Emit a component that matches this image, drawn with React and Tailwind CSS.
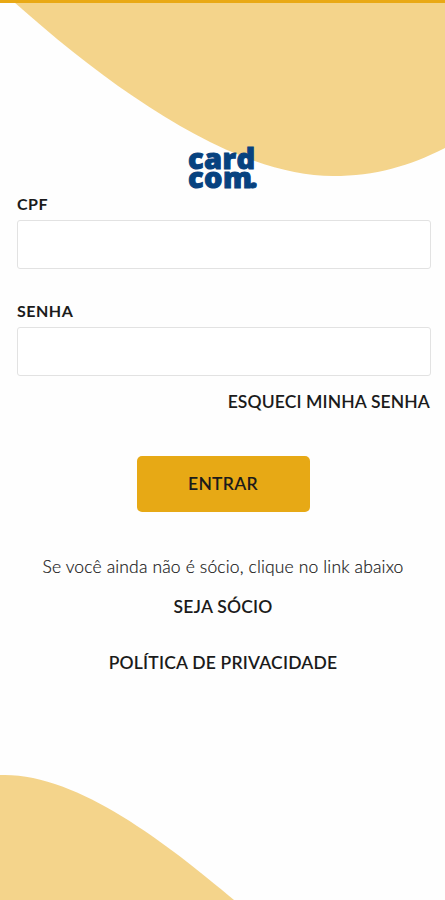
import React from 'react';

const Logo = () => (
  <div className="self-start ml-[171px] h-[50px] text-[29px] leading-[19px] font-extrabold text-[#07427f] font-['Open_Sans',sans-serif] tracking-[0.4px] [-webkit-text-stroke:1px_#07427f]">
    card
    <br />
    com<span className="-ml-[2px] italic">.</span>
  </div>
);

const Field = ({ id, label, type }) => (
  <div className="w-full">
    <label htmlFor={id} className="block h-[22px] text-[16px] leading-[22px] font-bold tracking-[0.5px]">
      {label}
    </label>
    <input
      id={id}
      type={type}
      className="block mt-[5px] w-full h-[49px] px-3 rounded-[3px] border border-[#e2e2e2] bg-white outline-none"
    />
  </div>
);

const App = () => {
  return (
    <div className="relative w-full h-[900px] overflow-hidden bg-[#fefefe] text-[#1b1b1b] font-['Lato',sans-serif]">
      {/* Background waves */}
      <svg className="absolute inset-0" width="445" height="900" viewBox="0 0 445 900" fill="#f4d48b">
        <path d="M14 2C115 92 235 176 333 176C375 176 410 166 445 148V2Z" />
        <path d="M0 775C75 772 165 842 234 900H0Z" />
      </svg>

      <div className="relative flex flex-col items-center h-full">
        <div className="w-full h-[3px] bg-[#e9a915]" />

        <div className="flex flex-col items-center w-full pl-[17px] pr-[14px] pt-[145px]">
          <Logo />

          <div className="-mt-[5px] w-full">
            <Field id="cpf" label="CPF" type="text" />
          </div>
          <div className="mt-[31px] w-full">
            <Field id="senha" label="SENHA" type="password" />
          </div>

          <a href="#" className="self-end mt-[14px] mr-[1px] text-[17.5px] leading-[24px] font-semibold tracking-[0.12px]">
            ESQUECI MINHA SENHA
          </a>
        </div>

        <button className="mt-[42px] ml-[1px] w-[173px] h-[56px] rounded-[5px] bg-[#e7a915] text-[17.5px] font-semibold tracking-[0.3px]">
          ENTRAR
        </button>

        <p className="mt-[43px] ml-[1px] text-[17.5px] leading-[24px] font-light tracking-[0.15px] [-webkit-text-stroke:0.2px_#1b1b1b]">
          Se você ainda não é sócio, clique no link abaixo
        </p>
        <a href="#" className="mt-[16px] ml-[1px] text-[17.5px] leading-[24px] font-semibold tracking-[0.2px]">
          SEJA SÓCIO
        </a>
        <a href="#" className="mt-[32px] ml-[1px] text-[17.5px] leading-[24px] font-semibold tracking-[0.2px]">
          POLÍTICA DE PRIVACIDADE
        </a>
      </div>
    </div>
  );
};

export default App;
